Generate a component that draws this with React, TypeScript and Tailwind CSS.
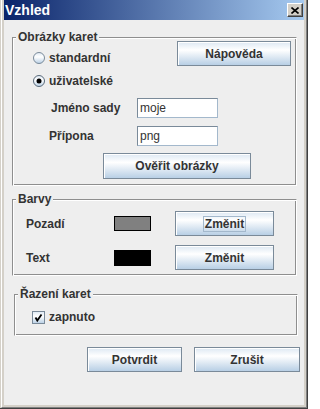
import React from "react";

function Btn({ className, children, focus }: { className: string; children: React.ReactNode; focus?: boolean }) {
  return (
    <div
      className={
        "flex items-center justify-center border border-[#7a8a99] bg-[linear-gradient(to_bottom,#dde8f3_0%,#ffffff_35%,#b8cfe5_100%)] shadow-[inset_1px_1px_0_#ffffff] text-[12px] font-bold text-[#333333] leading-[14px] " +
        className
      }
    >
      {focus ? <span className="border border-[#a3b8cc] px-[1px] leading-[14px]">{children}</span> : children}
    </div>
  );
}

function Panel({ title, className, children }: { title: string; className: string; children: React.ReactNode }) {
  return (
    <div
      className={
        "flex flex-col border border-t-[#8e8e8e] border-l-[#8e8e8e] border-r-white border-b-white shadow-[inset_1px_1px_0_#ffffff,inset_-1px_-1px_0_#8e8e8e] " +
        className
      }
    >
      <div className="-mt-[8px] h-[14px] leading-[14px] text-[12px] font-bold text-[#333333]">
        <span className="ml-[3px] bg-[#eeeeee] px-[2px]">{title}</span>
      </div>
      {children}
    </div>
  );
}

function Radio({ checked }: { checked?: boolean }) {
  return (
    <svg width="12" height="12" viewBox="0 0 12 12" className="shrink-0">
      <defs>
        <linearGradient id={checked ? "rg1" : "rg0"} x1="0" y1="0" x2="0" y2="1">
          <stop offset="0" stopColor="#dde8f3" />
          <stop offset="0.4" stopColor="#ffffff" />
          <stop offset="1" stopColor="#b8cfe5" />
        </linearGradient>
      </defs>
      <circle cx="6" cy="6" r="5.5" fill={checked ? "url(#rg1)" : "url(#rg0)"} stroke={checked ? "#5a6a79" : "#7a8a99"} />
      {checked && <circle cx="6" cy="6" r="2.5" fill="#000000" />}
    </svg>
  );
}

function TextField({ value }: { value: string }) {
  return (
    <div className="w-[81px] h-[20px] bg-white border border-t-[#7a8a99] border-l-[#7a8a99] border-r-[#a3b8cc] border-b-[#a3b8cc] pl-[2px] text-[12px] font-normal leading-[18px] text-[#333333]">
      {value}
    </div>
  );
}

export default function App() {
  return (
    <div className="w-[308px] h-[409px] bg-[#d4d0c8] border-r border-b border-r-[#404040] border-b-[#404040] pl-px flex flex-col font-['Liberation_Sans',Arial,sans-serif]">
      <div className="flex-1 flex flex-col border-l border-l-white border-r border-b border-r-[#808080] border-b-[#808080] pl-[2px] pr-[2px] pb-[2px]">
        {/* title bar */}
        <div className="h-[20px] shrink-0 flex items-center bg-[linear-gradient(to_right,#0a246a,#a6caf0)] pl-[1px]">
          <span className="text-[14px] font-bold text-white leading-[16px]">Vzhled</span>
          <div className="ml-auto mr-[1px] w-[16px] h-[14px] bg-[#d4d0c8] border border-t-white border-l-white border-r-[#404040] border-b-[#404040] shadow-[inset_-1px_-1px_0_#808080] flex items-center justify-center">
            <svg width="8" height="7" viewBox="0 0 8 7">
              <path d="M0.5 0.5 L7.5 6.5 M7.5 0.5 L0.5 6.5" stroke="#000000" strokeWidth="1.6" />
            </svg>
          </div>
        </div>

        {/* content */}
        <div className="flex-1 bg-[#eeeeee] flex flex-col text-[12px] font-bold text-[#333333] leading-[14px]">
          <Panel title="Obrázky karet" className="mt-[17px] ml-[8px] w-[285px] pb-[6px]">
            <div className="-mt-[3px] flex items-start">
              <div className="mt-[10px] ml-[20px] h-[14px] flex items-center gap-[4px]">
                <Radio />
                <span>standardní</span>
              </div>
              <Btn className="ml-auto mr-[5px] w-[114px] h-[25px]">Nápověda</Btn>
            </div>
            <div className="mt-[8px] ml-[20px] h-[14px] flex items-center gap-[4px]">
              <Radio checked />
              <span>uživatelské</span>
            </div>
            <div className="mt-[10px] h-[20px] flex items-center">
              <span className="ml-[38px] w-[86px]">Jméno sady</span>
              <TextField value="moje" />
            </div>
            <div className="mt-[8px] h-[20px] flex items-center">
              <span className="ml-[36px] w-[88px]">Přípona</span>
              <TextField value="png" />
            </div>
            <div className="mt-[7px] flex">
              <Btn className="ml-[90px] w-[148px] h-[26px]">Ověřit obrázky</Btn>
            </div>
          </Panel>

          <Panel title="Barvy" className="mt-[13px] ml-[8px] w-[285px] pb-[5px]">
            <div className="mt-[5px] h-[25px] flex items-center">
              <span className="ml-[13px] w-[88px]">Pozadí</span>
              <div className="w-[37px] h-[15px] border border-black bg-[#808080]" />
              <Btn className="ml-[24px] w-[99px] h-[25px]" focus>
                Změnit
              </Btn>
            </div>
            <div className="mt-[9px] h-[25px] flex items-center">
              <span className="ml-[13px] w-[88px]">Text</span>
              <div className="w-[37px] h-[16px] border border-black bg-black" />
              <Btn className="ml-[24px] w-[99px] h-[25px]">Změnit</Btn>
            </div>
          </Panel>

          <Panel title="Řazení karet" className="mt-[18px] ml-[10px] w-[284px] pb-[11px]">
            <div className="mt-[9px] ml-[17px] h-[14px] flex items-center gap-[4px]">
              <svg width="13" height="13" viewBox="0 0 13 13" className="shrink-0">
                <defs>
                  <linearGradient id="cg" x1="0" y1="0" x2="0" y2="1">
                    <stop offset="0" stopColor="#dde8f3" />
                    <stop offset="0.4" stopColor="#ffffff" />
                    <stop offset="1" stopColor="#b8cfe5" />
                  </linearGradient>
                </defs>
                <rect x="0.5" y="0.5" width="12" height="12" fill="url(#cg)" stroke="#7a8a99" />
                <path d="M3.5 6.5 L5.3 9.5 L9.5 3.5" fill="none" stroke="#000000" strokeWidth="1.8" />
              </svg>
              <span>zapnuto</span>
            </div>
          </Panel>

          <div className="mt-[11px] ml-[83px] flex gap-[12px]">
            <Btn className="w-[95px] h-[25px]">Potvrdit</Btn>
            <Btn className="w-[106px] h-[25px]">Zrušit</Btn>
          </div>
        </div>
      </div>
    </div>
  );
}
